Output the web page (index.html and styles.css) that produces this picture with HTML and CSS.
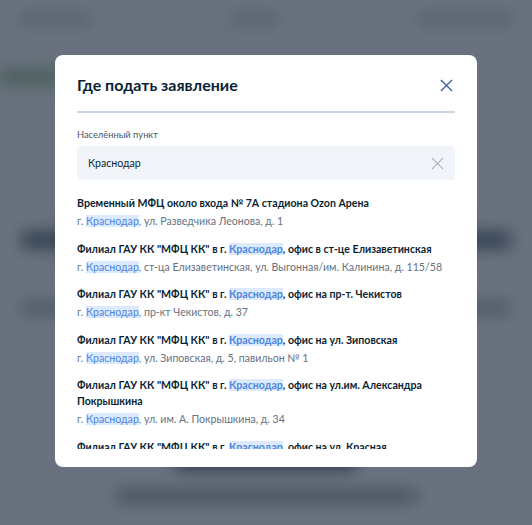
FILE: index.html
```html
<!DOCTYPE html>
<html lang="ru">

<head>
    <meta charset="UTF-8">
    <title>Где подать заявление</title>
    <meta name="viewport" content="width=device-width, initial-scale=1.0">
    <link rel="stylesheet" href="styles.css">
</head>

<body>

    <!-- page behind the dialog, blurred -->
    <div class="page">
        <div class="page-top">
            <span class="blk w120"></span>
            <span class="blk w80"></span>
            <span class="blk w160"></span>
        </div>
        <div class="page-btn"></div>
        <div class="page-row">
            <span class="blk big w60"></span>
            <span class="blk big w50 push"></span>
        </div>
        <div class="page-row two">
            <span class="blk w50"></span>
            <span class="blk w70 push"></span>
        </div>
        <div class="page-center">
            <span class="blk big w180"></span>
            <span class="blk w300"></span>
        </div>
    </div>

    <div class="overlay">
        <div class="modal">
            <div class="modal-head">
                <h2>Где подать заявление</h2>
                <button class="close" aria-label="Закрыть">
                    <svg width="13" height="13" viewBox="0 0 14 14">
                        <path d="M1 1L13 13M13 1L1 13" stroke="#3b5da8" stroke-width="1.4" fill="none" />
                    </svg>
                </button>
            </div>

            <label class="field-label" for="city">Населённый пункт</label>
            <div class="field">
                <input id="city" type="text" value="Краснодар">
                <span class="clear">
                    <svg width="13" height="13" viewBox="0 0 14 14">
                        <path d="M1 1L13 13M13 1L1 13" stroke="#a9b1bd" stroke-width="1.2" fill="none" />
                    </svg>
                </span>
            </div>

            <div class="list">
                <div class="item">
                    <div class="name">Временный МФЦ около входа № 7А стадиона Ozon Арена</div>
                    <div class="addr">г. <mark>Краснодар</mark>, ул. Разведчика Леонова, д. 1</div>
                </div>
                <div class="item">
                    <div class="name">Филиал ГАУ КК "МФЦ КК" в г. <mark>Краснодар</mark>, офис в ст-це Елизаветинская</div>
                    <div class="addr">г. <mark>Краснодар</mark>, ст-ца Елизаветинская, ул. Выгонная/им. Калинина, д. 115/58</div>
                </div>
                <div class="item">
                    <div class="name">Филиал ГАУ КК "МФЦ КК" в г. <mark>Краснодар</mark>, офис на пр-т. Чекистов</div>
                    <div class="addr">г. <mark>Краснодар</mark>, пр-кт Чекистов, д. 37</div>
                </div>
                <div class="item">
                    <div class="name">Филиал ГАУ КК "МФЦ КК" в г. <mark>Краснодар</mark>, офис на ул. Зиповская</div>
                    <div class="addr">г. <mark>Краснодар</mark>, ул. Зиповская, д. 5, павильон № 1</div>
                </div>
                <div class="item">
                    <div class="name">Филиал ГАУ КК "МФЦ КК" в г. <mark>Краснодар</mark>, офис на ул.им. Александра Покрышкина</div>
                    <div class="addr">г. <mark>Краснодар</mark>, ул. им. А. Покрышкина, д. 34</div>
                </div>
                <div class="item">
                    <div class="name">Филиал ГАУ КК "МФЦ КК" в г. <mark>Краснодар</mark>, офис на ул. Красная</div>
                    <div class="addr">г. <mark>Краснодар</mark>, ул. Красная, д. 1</div>
                </div>
            </div>
        </div>
    </div>

</body>

</html>
```

FILE: styles.css
```css
body {
    margin: 0;
    font-family: Lato, "Noto Sans", sans-serif;
    background: #fff;
    overflow: hidden;
}

/* blurred page under the dialog */
.page {
    height: 525px;
    display: flex;
    flex-direction: column;
    padding: 8px 0 0;
    filter: blur(8px);
    box-sizing: border-box;
}

.blk {
    display: block;
    height: 10px;
    background: #c9cfd6;
}

.blk.big {
    height: 16px;
    background: #6b7784;
}

.w50 { width: 50px; }
.w60 { width: 60px; }
.w70 { width: 70px; }
.w80 { width: 80px; }
.w120 { width: 120px; }
.w160 { width: 160px; }
.w180 { width: 180px; }
.w300 { width: 300px; }

.push {
    margin-left: auto;
}

.page-top {
    display: flex;
    gap: 140px;
    padding: 6px 20px;
}

.page-btn {
    width: 60px;
    height: 14px;
    margin: 40px 0 0;
    background: #a8c79c;
}

.page-row {
    display: flex;
    margin-top: 148px;
    padding: 0 22px 0 22px;
}

.page-row.two {
    margin-top: 55px;
}

.page-row.two .blk {
    background: #a3adb8;
}

.page-center {
    display: flex;
    flex-direction: column;
    align-items: center;
    gap: 22px;
    margin-top: 140px;
}

.page-center .blk {
    background: #8a96a3;
}

.page-center .blk.big {
    background: #56636f;
}

/* dialog */
.overlay {
    position: fixed;
    inset: 0;
    background: rgba(11, 26, 45, 0.62);
    display: flex;
    justify-content: center;
    align-items: flex-start;
}

.modal {
    width: 422px;
    height: 412px;
    margin-top: 55px;
    background: #fff;
    border-radius: 8px;
    padding: 18px 22px 18px;
    box-sizing: border-box;
    display: flex;
    flex-direction: column;
    color: #0b1f33;
}

.modal-head {
    display: flex;
    align-items: center;
    justify-content: space-between;
    padding-bottom: 14px;
    border-bottom: 2px solid #c9d4e4;
}

.modal-head h2 {
    margin: 0;
    font-size: 16px;
    line-height: 24px;
    font-weight: 700;
}

.close {
    border: 0;
    background: none;
    padding: 0;
    margin-right: 2px;
    display: flex;
}

.field-label {
    margin-top: 15px;
    font-size: 9.3px;
    line-height: 13px;
    color: #4b5663;
}

.field {
    margin-top: 5px;
    height: 34px;
    background: #f1f4f9;
    border-radius: 4px;
    display: flex;
    align-items: center;
    padding: 0 11px;
}

.field input {
    flex: 1;
    border: 0;
    background: none;
    font-family: inherit;
    font-size: 10.6px;
    color: #0b1f33;
    padding: 0;
    outline: none;
}

.clear {
    display: flex;
}

.list {
    margin-top: 15px;
    flex: 1;
    overflow: hidden;
    display: flex;
    flex-direction: column;
    gap: 11.5px;
}

.item {
    flex-shrink: 0;
}

.item .name {
    font-size: 10.6px;
    line-height: 16px;
    font-weight: 700;
}

.item .addr {
    margin-top: 2px;
    font-size: 10.6px;
    line-height: 16px;
    color: #66727f;
}

mark {
    background: #dde9fd;
    color: #4d86e0;
}
```
